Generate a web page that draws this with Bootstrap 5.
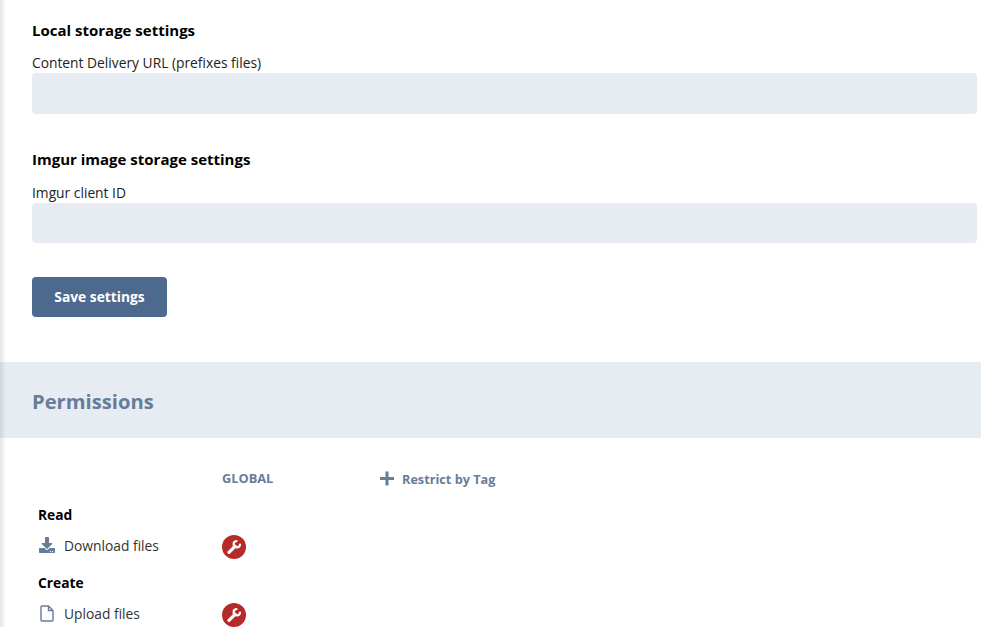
<!DOCTYPE html>
<html lang="en">
<head>
<meta charset="utf-8">
<title>Settings</title>
<link href="https://cdn.jsdelivr.net/npm/bootstrap@5.3.0/dist/css/bootstrap.min.css" rel="stylesheet">
<style>
html,body{height:627px;overflow:hidden}
body{font-family:"Open Sans","Noto Sans",sans-serif;font-size:13.8px;color:#111;background:#fff;position:relative}
body::before{content:"";position:absolute;left:0;top:0;bottom:0;width:6px;background:linear-gradient(to right,rgba(0,0,0,.1),rgba(0,0,0,0));z-index:2}
.pane-top{padding:0 4px 45px 32px}
.set-head{font-size:15px;font-weight:700;line-height:20px;color:#000;margin:0}
.set-head-a{padding-top:20px;margin-bottom:14px}
.set-head-b{padding-top:35px;margin-bottom:15px}
.set-label{display:block;line-height:18px;margin:0;height:19px;color:#222}
.set-input{height:40px;background:#e7ecf3;border:0;border-radius:4px;display:block}
.set-input-tall{height:41px}
.save-btn{background:#4d698e;color:#fff;font-size:13.8px;font-weight:700;height:40px;width:135px;border:0;border-radius:4px;margin-top:34px;padding:0}
.save-btn:hover{background:#4d698e;color:#fff}
.perm-band{background:#e7ecf3;height:76px;padding-left:32px;display:flex;align-items:center}
.perm-band h2{font-size:20.2px;font-weight:700;color:#667d99;margin:0;padding-top:3px}
.perm-grid{padding:0 0 0 38px}
.perm-headrow{height:35px;margin-top:33px;margin-bottom:0}
.col-first{width:184px;flex:none}
.col-global{width:158px;flex:none;font-size:12.8px;font-weight:700;color:#667d99;line-height:16px;margin-top:-1px}
.restrict{font-size:12.7px;font-weight:700;color:#667d99;line-height:16px}
.restrict svg{margin-right:7px;margin-top:-2px;margin-left:-1px;width:16px}
.perm-group{font-weight:700;color:#000;font-size:13.8px;line-height:18px;height:18px}
.perm-row{height:50px;align-items:flex-start}
.perm-name{color:#333;line-height:18px;padding-top:13px;gap:8px}
.ico-slot{width:18px;display:flex;justify-content:center;flex:none}
.wrench{width:24px;height:24px;background:#b72a2a;border-radius:50%;display:flex;align-items:center;justify-content:center;margin-top:11px}
.wrench-line{fill:none;stroke:#fff;stroke-linecap:round}
</style>
</head>
<body>
<main>
  <section class="pane-top">
    <h3 class="set-head set-head-a">Local storage settings</h3>
    <label class="set-label" for="cdn">Content Delivery URL (prefixes files)</label>
    <input class="set-input set-input-tall w-100" id="cdn" type="text">
    <h3 class="set-head set-head-b">Imgur image storage settings</h3>
    <label class="set-label" for="imgur">Imgur client ID</label>
    <input class="set-input w-100" id="imgur" type="text">
    <button class="btn save-btn d-block" type="button">Save settings</button>
  </section>
  <section class="perm-band"><h2>Permissions</h2></section>
  <section class="perm-grid">
    <div class="d-flex perm-headrow">
      <div class="col-first"></div>
      <div class="col-global">GLOBAL</div>
      <div class="restrict d-flex align-items-center align-self-start">
        <svg height="15" viewBox="0 0 15 15" aria-hidden="true"><path d="M6 .5h3v5.500h5.500v3H9v5.500H6V9H.5V6H6z" fill="#667d99"/></svg>
        <span>Restrict by Tag</span>
      </div>
    </div>
    <div class="perm-group">Read</div>
    <div class="d-flex perm-row">
      <div class="col-first d-flex perm-name">
        <span class="ico-slot"><svg width="16" height="16" viewBox="0 0 512 512" aria-hidden="true"><path fill="#667d99" d="M216 0h80c13 0 24 11 24 24v168h88c18 0 27 21 14 34L270 378c-7 8-21 8-28 0L90 226c-13-13-4-34 14-34h88V24c0-13 11-24 24-24zM512 376v112c0 13-11 24-24 24H24c-13 0-24-11-24-24V376c0-13 11-24 24-24h147l49 49c20 20 52 20 72 0l49-49h147c13 0 24 11 24 24zM388 464a20 20 0 1 0-40 0 20 20 0 0 0 40 0zm64 0a20 20 0 1 0-40 0 20 20 0 0 0 40 0z"/></svg></span>
        <span>Download files</span>
      </div>
      <div class="wrench"><svg width="16" height="16" viewBox="0 0 16 16" aria-hidden="true"><path class="wrench-line" stroke-width="3.2" d="M3 13.300 9 7.300"/><path class="wrench-line" stroke-width="2.200" d="M10.500 2a3.200 3.200 0 1 0 3.500 3.500"/></svg></div>
    </div>
    <div class="perm-group">Create</div>
    <div class="d-flex perm-row">
      <div class="col-first d-flex perm-name">
        <span class="ico-slot"><svg width="14" height="17" viewBox="0 0 14 17" aria-hidden="true"><path fill="none" stroke="#667d99" stroke-width="1.4" d="M1 2c0-.6.4-1 1-1h6.500L13 5.500V15c0 .6-.4 1-1 1H2c-.6 0-1-.4-1-1zM8.500 1v4.500H13"/></svg></span>
        <span>Upload files</span>
      </div>
      <div class="wrench"><svg width="16" height="16" viewBox="0 0 16 16" aria-hidden="true"><path class="wrench-line" stroke-width="3.2" d="M3 13.300 9 7.300"/><path class="wrench-line" stroke-width="2.200" d="M10.500 2a3.200 3.200 0 1 0 3.500 3.500"/></svg></div>
    </div>
  </section>
</main>
<script src="https://cdn.jsdelivr.net/npm/bootstrap@5.3.0/dist/js/bootstrap.bundle.min.js"></script>
</body>
</html>
